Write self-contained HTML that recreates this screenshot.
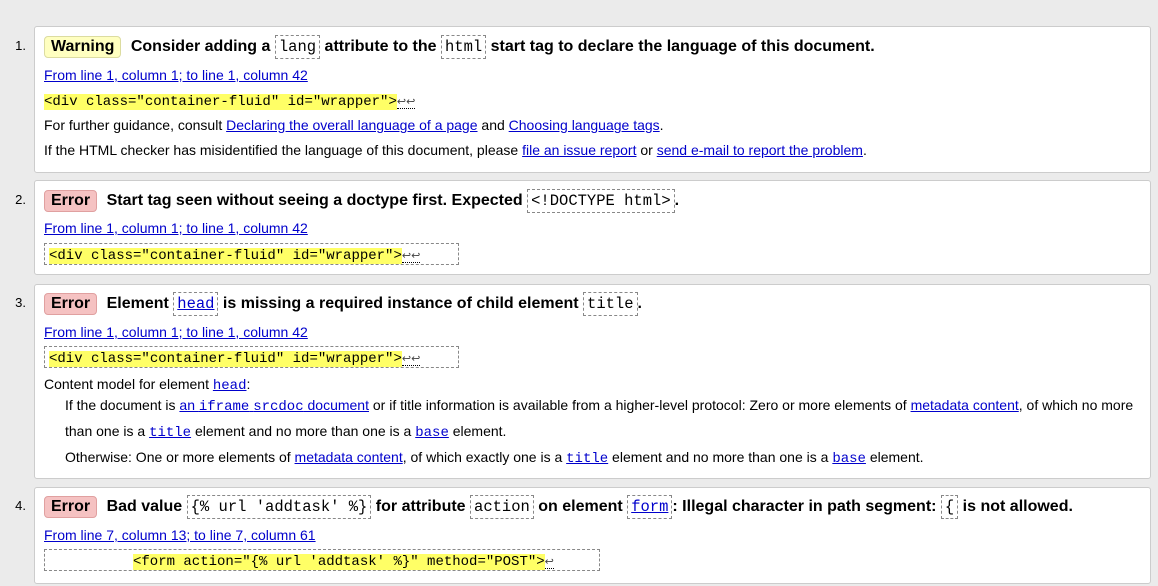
<!DOCTYPE html>
<html><head><style>
body{margin:0;width:1158px;height:586px;background:#ebebeb;font-family:"Liberation Sans",Arial,sans-serif;font-size:14px;color:#000;position:relative;overflow:hidden}
.box{position:absolute;left:34px;width:1115px;background:#fff;border:1px solid #ccc;border-radius:3px}
.n{position:absolute;left:0;width:26px;text-align:right;font-size:13px}
.l{position:absolute;left:44px;white-space:nowrap;height:20px;line-height:20px}
.h{font-weight:bold;font-size:16px}
a{color:#00c;text-decoration:underline}
code{font-family:"Liberation Mono",monospace;font-size:14px;font-weight:normal}
.h code{font-size:15.5px}
.cb{border:1px dashed #888;padding:2px 3px}
.badge{display:inline-block;padding:0 6px;border-radius:4px;line-height:20px;margin-right:5px}
.w{background:#ffffc0;border:1px solid #dcdca0}
.e{background:#f5c2c2;border:1px solid #e0a0a0}
.hl{background:#ffff66}
.ext{position:absolute;left:44px;width:409px;height:20px;border:1px dashed #888;white-space:nowrap;line-height:20px}
.ret{font-size:11px;color:#444;border-bottom:1px dotted #000}
</style></head><body>
<div class="box" style="top:26px;height:145px"></div>
<div class="box" style="top:180px;height:93px"></div>
<div class="box" style="top:284px;height:193px"></div>
<div class="box" style="top:487px;height:95px"></div>

<div class="n" style="top:38px">1.</div>
<div class="l h" style="top:35px;height:24px;line-height:24px"><span class="badge w">Warning</span> Consider adding a <code class="cb">lang</code> attribute to the <code class="cb">html</code> start tag to declare the language of this document.</div>
<div class="l" style="top:65px"><a>From line 1, column 1; to line 1, column 42</a></div>
<div class="l" style="top:90px"><code class="hl">&lt;div class="container-fluid" id="wrapper"&gt;</code><span class="ret">↩↩</span></div>
<div class="l" style="top:115px">For further guidance, consult <a>Declaring the overall language of a page</a> and <a>Choosing language tags</a>.</div>
<div class="l" style="top:140px">If the HTML checker has misidentified the language of this document, please <a>file an issue report</a> or <a>send e-mail to report the problem</a>.</div>

<div class="n" style="top:192px">2.</div>
<div class="l h" style="top:189px;height:24px;line-height:24px"><span class="badge e">Error</span> Start tag seen without seeing a doctype first. Expected <code class="cb">&lt;!DOCTYPE html&gt;</code>.</div>
<div class="l" style="top:218px"><a>From line 1, column 1; to line 1, column 42</a></div>
<div class="ext" style="top:243px;padding-left:4px"><code class="hl">&lt;div class="container-fluid" id="wrapper"&gt;</code><span class="ret">↩↩</span></div>

<div class="n" style="top:295px">3.</div>
<div class="l h" style="top:292px;height:24px;line-height:24px"><span class="badge e">Error</span> Element <a><code class="cb">head</code></a> is missing a required instance of child element <code class="cb">title</code>.</div>
<div class="l" style="top:322px"><a>From line 1, column 1; to line 1, column 42</a></div>
<div class="ext" style="top:346px;padding-left:4px"><code class="hl">&lt;div class="container-fluid" id="wrapper"&gt;</code><span class="ret">↩↩</span></div>
<div class="l" style="top:374px">Content model for element <a><code>head</code></a>:</div>
<div class="l" style="top:395px;left:65px">If the document is <a>an <code>iframe</code> <code>srcdoc</code> document</a> or if title information is available from a higher-level protocol: Zero or more elements of <a>metadata content</a>, of which no more</div>
<div class="l" style="top:421px;left:65px">than one is a <a><code>title</code></a> element and no more than one is a <a><code>base</code></a> element.</div>
<div class="l" style="top:447px;left:65px">Otherwise: One or more elements of <a>metadata content</a>, of which exactly one is a <a><code>title</code></a> element and no more than one is a <a><code>base</code></a> element.</div>

<div class="n" style="top:498px">4.</div>
<div class="l h" style="top:495px;height:24px;line-height:24px"><span class="badge e">Error</span> Bad value <code class="cb">{% url 'addtask' %}</code> for attribute <code class="cb">action</code> on element <a><code class="cb">form</code></a>: Illegal character in path segment: <code class="cb">{</code> is not allowed.</div>
<div class="l" style="top:525px"><a>From line 7, column 13; to line 7, column 61</a></div>
<div class="ext" style="top:549px;width:554px;padding-left:0"><span style="display:inline-block;width:88px"></span><code class="hl">&lt;form action="{% url 'addtask' %}" method="POST"&gt;</code><span class="ret">↩</span></div>
</body></html>
